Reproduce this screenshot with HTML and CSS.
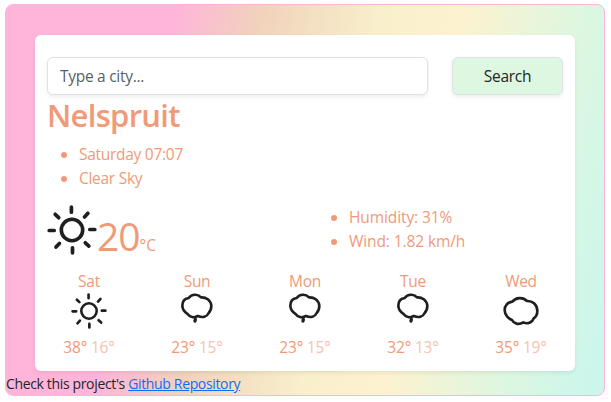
FILE: index.html
```html
<!DOCTYPE html>
<html lang="en">
<head>
<meta charset="utf-8">
<title>Weather</title>
<link rel="stylesheet" href="styles.css">
</head>
<body>
<svg class="defs" aria-hidden="true">
  <symbol id="sun" viewBox="0 0 50 50">
    <circle cx="25" cy="25" r="10.7" stroke-width="3.6"/>
    <path stroke-width="3.7" d="M24.4 2.2v5M25.5 42.8v5M2.2 25.5h5M42.8 24.5h5M8.2 9.3l3.5 3.4M37.5 12l3.4-3.7M38.3 37.8l3.6 3.3M12.4 38.4l-3.4 3.7"/>
  </symbol>
  <symbol id="rain" viewBox="0 0 108 108">
    <path stroke-width="8" d="M10 38C10 26 17 17 29 15C38 3 56 2 66 13C81 12 95 21 97 38C97 48 94 55 89 60C84 71 71 75 57 69C44 76 32 72 27 64C18 58 10 50 10 38Z"/>
    <path stroke-width="10" d="M49 79L48 84"/>
  </symbol>
  <symbol id="cloud" viewBox="0 0 108 108">
    <path stroke-width="8" d="M5 52C5 38 14 28 28 26C38 13 60 11 72 24C88 23 102 34 103 53C103 64 98 72 92 76C87 90 73 94 61 88C47 97 32 92 27 81C18 78 5 67 5 52Z"/>
  </symbol>
</svg>
<main class="container">
  <section class="card">
    <form class="search">
      <input class="field" type="text" placeholder="Type a city...">
      <button class="button" type="button">Search</button>
    </form>
    <h1 class="city">Nelspruit</h1>
    <ul class="list"><li>Saturday 07:07</li><li>Clear Sky</li></ul>
    <div class="current">
      <div class="now"><svg class="icon-large"><use href="#sun"/></svg><span class="temperature">20</span><span class="unit">°C</span></div>
      <ul class="list details"><li>Humidity: 31%</li><li>Wind: 1.82 km/h</li></ul>
    </div>
    <div class="forecast">
      <div class="day"><div>Sat</div><svg class="icon"><use href="#sun"/></svg><div class="range">38° <span class="min">16°</span></div></div>
      <div class="day"><div>Sun</div><svg class="icon"><use href="#rain"/></svg><div class="range">23° <span class="min">15°</span></div></div>
      <div class="day"><div>Mon</div><svg class="icon"><use href="#rain"/></svg><div class="range">23° <span class="min">15°</span></div></div>
      <div class="day"><div>Tue</div><svg class="icon"><use href="#rain"/></svg><div class="range">32° <span class="min">13°</span></div></div>
      <div class="day"><div>Wed</div><svg class="icon"><use href="#cloud"/></svg><div class="range">35° <span class="min">19°</span></div></div>
    </div>
  </section>
  <footer class="footer">Check this project's <a href="#">Github Repository</a></footer>
</main>
</body>
</html>
```
FILE: styles.css
```css
* { box-sizing: border-box; }
body {
  margin: 0;
  padding: 4px 5px;
  background: #fff;
  color: #212529;
  font: 15.5px/24px "Open Sans", "Noto Sans", sans-serif;
  letter-spacing: -0.28px;
}
.defs { display: none; }
.container {
  width: 600px;
  height: 392px;
  padding-top: 30px;
  border: 1px solid #ffb5da;
  border-radius: 8px;
  background: linear-gradient(102deg, #ffb5da 25%, #f0d3bb 38%, #f8efcb 55%, #fdf2cf 67%, #ddf7e0 85%, #c9f6ee 100%);
}
.card {
  width: 540px;
  height: 336px;
  margin: 0 auto;
  padding: 22px 12px 0;
  border-radius: 6px;
  background: #fff;
  box-shadow: 0 2px 4px rgba(0, 0, 0, .075);
  color: #f09a78;
}
.search { display: grid; grid-template-columns: 381px 111px; column-gap: 24px; }
.field, .button {
  height: 38px;
  border: 1px solid #dee2e6;
  border-radius: 6px;
  box-shadow: 0 2px 4px rgba(0, 0, 0, .075);
  font: inherit;
  letter-spacing: inherit;
}
.field { padding: 6px 12px; background: #fff; }
.field::placeholder { color: #595f65; opacity: 1; }
.button { background: #ddf7e0; color: #212529; }
.city { margin: 0 0 8px; padding-top: 1px; font-size: 31px; line-height: 38px; font-weight: 600; letter-spacing: -0.7px; }
.list { margin: 0; padding-left: 32px; }
.current { display: grid; grid-template-columns: 1fr 1fr; column-gap: 24px; margin-top: 15px; height: 64px; }
.now { display: flex; align-items: baseline; height: 50px; white-space: nowrap; }
.icon-large, .icon { fill: none; stroke: #1f1f1f; stroke-linecap: round; stroke-linejoin: round; }
.icon-large { align-self: flex-start; width: 50px; height: 50px; }
.temperature { font-size: 39px; line-height: 62px; font-weight: 400; letter-spacing: -1px; }
.unit { font-size: 15.5px; letter-spacing: 0; }
.details { padding-left: 32px; font-weight: 500; letter-spacing: -0.1px; }
.forecast { display: grid; grid-template-columns: repeat(5, 84px); justify-content: space-between; text-align: center; font-weight: 500; }
.icon { display: block; width: 36px; height: 36px; margin: 0 auto 6px; }
.range { letter-spacing: -0.2px; }
.min { opacity: .6; }
.footer { padding-top: 1px; font-size: 14px; line-height: 24px; letter-spacing: -0.35px; }
.footer a { color: #0d6efd; }
```
